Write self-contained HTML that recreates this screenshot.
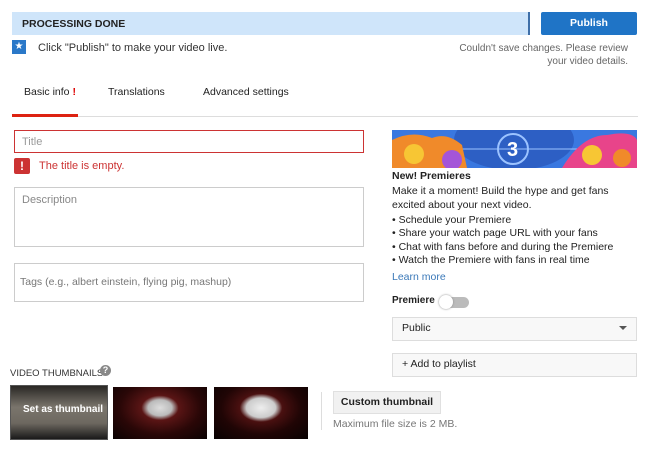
<!DOCTYPE html>
<html><head><style>
body{margin:0;width:650px;height:453px;background:#fff;font-family:"Liberation Sans",sans-serif;position:relative;overflow:hidden;color:#222}
.a{position:absolute}
</style></head><body>
<div class="a" style="left:12px;top:12px;width:516px;height:23px;background:#cfe5fa"></div>
<div class="a" style="left:528px;top:12px;width:2px;height:23px;background:#3f6fa8"></div>
<div class="a" style="left:22px;top:18px;font-size:10.5px;font-weight:bold;color:#222">PROCESSING DONE</div>
<div class="a" style="left:541px;top:12px;width:96px;height:23px;background:#1f74c6;border-radius:2px;color:#fff;font-size:10.5px;font-weight:bold;text-align:center;line-height:23px">Publish</div>
<div class="a" style="left:12px;top:40px;width:14px;height:14px;background:#2a78c8;color:#fff;font-size:10px;text-align:center;line-height:14px">★</div>
<div class="a" style="left:38px;top:42px;font-size:11px;color:#333">Click "Publish" to make your video live.</div>
<div class="a" style="left:440px;top:42px;width:188px;font-size:10px;color:#666;text-align:right;line-height:13px">Couldn't save changes. Please review your video details.</div>
<div class="a" style="left:24px;top:86px;font-size:10.5px;color:#222">Basic info <span style="color:#d00;font-weight:bold">!</span></div>
<div class="a" style="left:108px;top:86px;font-size:10.5px;color:#222">Translations</div>
<div class="a" style="left:203px;top:86px;font-size:10.5px;color:#222">Advanced settings</div>
<div class="a" style="left:12px;top:116px;width:626px;height:1px;background:#ddd"></div>
<div class="a" style="left:12px;top:114px;width:66px;height:3px;background:#d21"></div>

<div class="a" style="left:14px;top:130px;width:348px;height:21px;border:1px solid #c33"></div>
<div class="a" style="left:22px;top:136px;font-size:11px;color:#999">Title</div>
<div class="a" style="left:14px;top:158px;width:16px;height:16px;background:#c33;color:#fff;font-size:12px;font-weight:bold;text-align:center;line-height:16px;border-radius:2px">!</div>
<div class="a" style="left:39px;top:160px;font-size:11px;color:#c33">The title is empty.</div>
<div class="a" style="left:14px;top:187px;width:348px;height:58px;border:1px solid #ccc"></div>
<div class="a" style="left:22px;top:194px;font-size:11px;color:#888">Description</div>
<div class="a" style="left:14px;top:263px;width:348px;height:37px;border:1px solid #ccc"></div>
<div class="a" style="left:20px;top:276px;font-size:10.5px;color:#777">Tags (e.g., albert einstein, flying pig, mashup)</div>

<svg class="a" style="left:392px;top:130px" width="245" height="38"><rect width="245" height="38" fill="#3a78e0"/><ellipse cx="122" cy="10" rx="60" ry="30" fill="#2d5fc4"/><circle cx="121" cy="19" r="15" fill="none" stroke="#9cc3ff" stroke-width="2"/><line x1="60" y1="19" x2="185" y2="19" stroke="#9cc3ff"/><text x="115" y="26" font-family="Liberation Sans" font-weight="bold" font-size="20" fill="#fff">3</text><path d="M0 38 L0 10 Q20 0 40 8 Q55 2 70 15 L75 38Z" fill="#f08a2a"/><circle cx="22" cy="24" r="10" fill="#f7c634"/><circle cx="60" cy="30" r="10" fill="#a455d8"/><path d="M170 38 Q190 5 215 5 Q240 0 245 10 L245 38Z" fill="#e8448a"/><circle cx="200" cy="25" r="10" fill="#f7c634"/><circle cx="230" cy="28" r="9" fill="#f08a2a"/></svg>
<div class="a" style="left:392px;top:170px;font-size:10.5px;font-weight:bold">New! Premieres</div>
<div class="a" style="left:392px;top:185px;font-size:10.5px;line-height:13.5px;color:#222">Make it a moment! Build the hype and get fans<br>excited about your next video.</div>
<div class="a" style="left:392px;top:214px;font-size:10.5px;line-height:13.3px;color:#222">• Schedule your Premiere<br>• Share your watch page URL with your fans<br>• Chat with fans before and during the Premiere<br>• Watch the Premiere with fans in real time</div>
<div class="a" style="left:392px;top:271px;font-size:10.5px;color:#3a78b8">Learn more</div>
<div class="a" style="left:392px;top:295px;font-size:10px;font-weight:bold">Premiere</div>
<div class="a" style="left:440px;top:297px;width:29px;height:11px;border-radius:6px;background:#bbb"></div>
<div class="a" style="left:439px;top:295px;width:14px;height:14px;border-radius:50%;background:#fff;box-shadow:0 0 2px #888"></div>
<div class="a" style="left:392px;top:317px;width:243px;height:22px;border:1px solid #ddd;background:#f8f8f8"></div>
<div class="a" style="left:402px;top:322px;font-size:10.5px">Public</div>
<div class="a" style="left:619px;top:326px;width:0;height:0;border-left:4px solid transparent;border-right:4px solid transparent;border-top:4px solid #555"></div>
<div class="a" style="left:392px;top:353px;width:243px;height:22px;border:1px solid #ddd;background:#f8f8f8"></div>
<div class="a" style="left:402px;top:358px;font-size:10.5px">+ Add to playlist</div>

<div class="a" style="left:10px;top:368px;font-size:9.5px;color:#333">VIDEO THUMBNAILS</div>
<div class="a" style="left:100px;top:365px;width:11px;height:11px;border-radius:50%;background:#888;color:#fff;font-size:9px;font-weight:bold;text-align:center;line-height:11px">?</div>
<div class="a" style="left:10px;top:385px;width:96px;height:53px;border:1px solid #555;background:linear-gradient(#2a2825,#7a756c 40%,#6d6860 70%,#1a1a1a)"></div>
<div class="a" style="left:23px;top:404px;font-size:10px;font-weight:bold;color:#fff">Set as thumbnail</div>
<div class="a" style="left:113px;top:387px;width:94px;height:52px;background:radial-gradient(ellipse at 50% 40%,#ddd 0,#bbb 18%,#5a1515 28%,#2a0707 60%,#0a0202)"></div>
<div class="a" style="left:214px;top:387px;width:94px;height:52px;background:radial-gradient(ellipse at 50% 40%,#eee 0,#ccc 22%,#4a1010 32%,#200505 60%,#080202)"></div>
<div class="a" style="left:321px;top:392px;width:1px;height:38px;background:#ddd"></div>
<div class="a" style="left:333px;top:391px;width:106px;height:21px;background:#f1f1f1;border:1px solid #e0e0e0;font-size:10.5px;font-weight:bold;text-align:center;line-height:21px">Custom thumbnail</div>
<div class="a" style="left:333px;top:418px;font-size:10.5px;color:#777">Maximum file size is 2 MB.</div>
</body></html>
